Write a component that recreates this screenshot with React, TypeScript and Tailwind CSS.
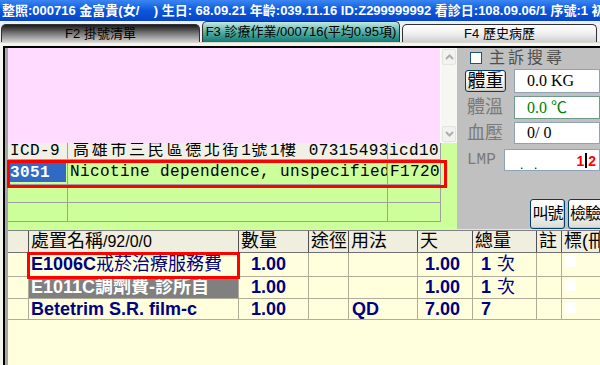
const SANS = "font-['Liberation_Sans','Noto_Sans_CJK_TC',sans-serif]";
const MONO = "font-['Liberation_Mono','Noto_Sans_CJK_TC',monospace]";
const SERIF = "font-['Liberation_Serif','Noto_Sans_CJK_TC',serif]";

function Chevron({ up }: { up?: boolean }) {
  return (
    <svg width="9" height="6" viewBox="0 0 9 6">
      <path
        d={up ? "M1 5 L4.5 1.5 L8 5" : "M1 1 L4.5 4.5 L8 1"}
        fill="none"
        stroke="#a8aeb8"
        strokeWidth="2"
      />
    </svg>
  );
}

function XpButton({ children, className }: { children: React.ReactNode; className?: string }) {
  return (
    <div
      className={
        "rounded-[3px] border border-[#003c74] bg-gradient-to-b from-white via-[#f4f4f0] to-[#dcdcd4] shadow-[inset_-1px_-1px_0_#c8c8c0] flex items-center justify-center text-black leading-none whitespace-nowrap overflow-hidden " +
        (className ?? "")
      }
    >
      {children}
    </div>
  );
}

function Check() {
  return <div className="w-[11px] h-[11px] bg-white mt-[3px] ml-[3px]" />;
}

export default function App() {
  const cols = [21, 210, 70, 40, 69, 55, 64, 25, 38];
  return (
    <div className={"w-[600px] h-[365px] overflow-hidden bg-[#f4f4ee] flex flex-col " + SANS}>
      {/* Title bar */}
      <div className="h-[21px] shrink-0 bg-gradient-to-b from-[#3a86f2] via-[#0b56dc] to-[#0846c6] text-white font-bold text-[13px] leading-[21px] pl-[2px] whitespace-pre overflow-hidden">
        整照:000716 金富貴(女/    ) 生日: 68.09.21 年齡:039.11.16 ID:Z299999992 看診日:108.09.06/1 序號:1 初診
      </div>

      {/* Tabs */}
      <div className="h-[22px] shrink-0 flex items-end gap-[2px] pl-[1px] bg-[#eef0f6] border-b border-[#d8d8cc]">
        <div className="w-[199px] h-[18px] rounded-t-[5px] border border-b-0 border-[#303030] bg-gradient-to-b from-[#1c1c1c] via-[#7a7a7a] to-[#d2d2d2] text-[13px] text-black flex items-center justify-center">
          F2 掛號清單
        </div>
        <div className="w-[198px] h-[21px] rounded-t-[5px] border border-b-0 border-[#303030] bg-gradient-to-b from-[#c4ebe5] via-[#52aea6] to-[#0c7a70] text-[13px] text-black flex items-center justify-center">
          F3 診療作業/000716(平均0.95項)
        </div>
        <div className="w-[195px] h-[18px] rounded-t-[5px] border border-b-0 border-[#303030] bg-gradient-to-b from-white via-[#f0f0f0] to-[#d0d0d0] text-[13px] text-black flex items-center justify-center">
          F4 歷史病歷
        </div>
      </div>

      {/* Main */}
      <div className="flex-1 min-h-0 pt-[3px] pl-[3px] flex flex-col">
        <div className="flex-1 min-h-0 border-t-2 border-l-2 border-black flex">
          <div className="w-[3px] shrink-0 bg-[#a8a8a8]" />
          <div className="flex-1 min-w-0 flex flex-col">
            {/* Upper */}
            <div className="h-[181px] shrink-0 flex">
              <div className="w-[449px] shrink-0 flex flex-col relative">
                {/* pink memo */}
                <div className="h-[95px] flex">
                  <div className="flex-1 bg-[#ffdbff]" />
                  <div className="w-[17px] bg-[#f6f6f2] border-l border-white flex flex-col justify-between py-[1px]">
                    <div className="h-[16px] mx-[1px] rounded-[2px] bg-[#f2f2ee] border border-[#e4e4dc] flex items-center justify-center">
                      <Chevron up />
                    </div>
                    <div className="h-[16px] mx-[1px] rounded-[2px] bg-[#f2f2ee] border border-[#e4e4dc] flex items-center justify-center">
                      <Chevron />
                    </div>
                  </div>
                </div>
                {/* ICD grid */}
                <div className={"flex-1 bg-[#ccff99] text-black " + MONO}>
                  <div className="h-[17px] flex bg-[#f0f0e6] border-b border-[#a0a0a0] leading-[16px] text-[16px] tracking-[0.4px] w-[433px]">
                    <div className="w-[60px] border-r border-[#a0a0a0] pl-[2px] overflow-hidden whitespace-nowrap">ICD-9</div>
                    <div className="w-[320px] border-r border-[#a0a0a0] pl-[5px] overflow-hidden whitespace-pre">
                      <span className="tracking-[2.7px]">高雄市三民區德北街</span>1<span className="tracking-[2.7px]">號</span>1<span className="tracking-[2.7px]">樓</span> 07315493
                    </div>
                    <div className="w-[53px] border-r border-[#a0a0a0] pl-[1px] overflow-hidden whitespace-nowrap">icd10</div>
                  </div>
                  <div className="h-[25px] flex border-b border-[#a0a0a0] text-[16px] tracking-[0.4px] w-[433px]">
                    <div className="w-[60px] border-r border-[#a0a0a0] pt-[3px] pb-[2px] pl-[1px]">
                      <div className="h-full w-[57px] bg-[#316ac5] text-white font-bold leading-[20px] pl-[1px]">3051</div>
                    </div>
                    <div className="w-[320px] border-r border-[#a0a0a0] pl-[2px] leading-[25px] overflow-hidden whitespace-nowrap">
                      Nicotine dependence, unspecified
                    </div>
                    <div className="w-[53px] border-r border-[#a0a0a0] pl-[2px] leading-[25px] overflow-hidden whitespace-nowrap">F1720</div>
                  </div>
                  <div className="h-[18px] flex border-b border-[#a0a0a0] w-[433px]">
                    <div className="w-[60px] border-r border-[#a0a0a0]" />
                    <div className="w-[320px] border-r border-[#a0a0a0]" />
                    <div className="w-[53px] border-r border-[#a0a0a0]" />
                  </div>
                  <div className="h-[19px] flex border-b border-[#a0a0a0] w-[433px]">
                    <div className="w-[60px] border-r border-[#a0a0a0]" />
                    <div className="w-[320px] border-r border-[#a0a0a0]" />
                    <div className="w-[53px] border-r border-[#a0a0a0]" />
                  </div>
                </div>
                {/* red highlight */}
                <div className="absolute left-[-1px] top-[112px] w-[440px] h-[28px] border-[3px] border-[#ff0000]" />
              </div>

              {/* Right panel */}
              <div className="flex-1 bg-[#c0c0c0] flex flex-col pl-[8px] relative">
                <div className="h-[14px] mt-[3px] flex items-center">
                  <div className="w-[12px] h-[12px] border border-[#1c5180] bg-white ml-[5px]" />
                  <div className="ml-[7px] text-[16px] tracking-[3px] text-[#505050] leading-none">主訴搜尋</div>
                </div>
                <div className="h-[24px] mt-[4px] flex">
                  <XpButton className="w-[41px] h-[22px] mt-[1px] text-[18px]">體重</XpButton>
                  <div className={"ml-[8px] flex-1 bg-white border border-[#8fa3b8] pl-[12px] text-[16px] leading-[22px] text-black " + SERIF}>0.0 KG</div>
                </div>
                <div className="h-[23px] mt-[3px] flex">
                  <div className="w-[49px] text-[18px] text-[#7a7a7a] leading-[23px] pl-[2px]">體溫</div>
                  <div className={"flex-1 bg-white border border-[#6f9a8a] pl-[12px] text-[16px] leading-[21px] text-[#008000] " + SERIF}>0.0 ℃</div>
                </div>
                <div className="h-[22px] mt-[3px] flex">
                  <div className="w-[49px] text-[18px] text-[#7a7a7a] leading-[22px] pl-[2px]">血壓</div>
                  <div className={"flex-1 bg-white border border-[#8fa3b8] pl-[12px] text-[16px] leading-[20px] text-black " + SERIF}>0/ 0</div>
                </div>
                <div className="h-[22px] mt-[5px] flex">
                  <div className={"w-[39px] text-[16px] text-[#7a7a7a] leading-[22px] pl-[2px] " + MONO}>LMP</div>
                  <div className="flex-1 bg-white border border-[#8fa3b8] flex items-center relative">
                    <span className="absolute left-[15px] top-[9px] text-[12px] text-black leading-none">.</span>
                    <span className="absolute left-[29px] top-[9px] text-[12px] text-black leading-none">.</span>
                    <span className="absolute right-[3px] top-[3px] flex items-center text-[14px] font-bold text-[#ff0000] leading-[14px]">
                      1<span className="w-[2px] h-[15px] bg-black mx-[1px]" />2
                    </span>
                  </div>
                </div>
                <div className="flex-1" />
                <div className="flex justify-end gap-[3px] overflow-hidden">
                  <XpButton className="w-[35px] h-[30px] shrink-0 text-[16px] tracking-[-1px]">叫號</XpButton>
                  <XpButton className="w-[36px] h-[30px] shrink-0 -mr-[4px] justify-start pl-[1px] text-[16px] tracking-[-1px]">檢驗</XpButton>
                </div>
              </div>
            </div>

            {/* separator */}
            <div className="h-[2px] shrink-0 bg-[#e8e8e0] border-b border-[#808080]" />

            {/* Bottom grid */}
            <div className="flex-1 bg-[#ffffdd] relative">
              <div className="h-[22px] flex bg-[#efeedf] border-b border-[#707070] text-black">
                {[
                  "",
                  "處置名稱/92/0/0",
                  "數量",
                  "途徑",
                  "用法",
                  "天",
                  "總量",
                  "註",
                  "標(冊",
                ].map((t, i) => (
                  <div
                    key={i}
                    style={{ width: cols[i] }}
                    className="shrink-0 border-r border-[#505050] pl-[2px] text-[18px] leading-[21px] overflow-hidden whitespace-nowrap"
                  >
                    {i === 1 ? (
                      <>
                        處置名稱<span className="text-[16px]">/92/0/0</span>
                      </>
                    ) : (
                      t
                    )}
                  </div>
                ))}
              </div>
              {[
                { h: 24, code: "E1006C", name: "戒菸治療服務費", q: "1.00", use: "", day: "1.00", tot: "1", unit: "次", sel: false },
                { h: 22, code: "E1011C", name: "調劑費-診所自", q: "1.00", use: "", day: "1.00", tot: "1", unit: "次", sel: true },
                { h: 21, code: "Betetrim S.R. film-c", name: "", q: "1.00", use: "QD", day: "7.00", tot: "7", unit: "", sel: false },
              ].map((r, ri) => (
                <div key={ri} style={{ height: r.h }} className="flex border-b border-[#b0ac98] text-[#000080]">
                  <div style={{ width: cols[0] }} className="shrink-0 border-r border-[#b0ac98]" />
                  <div style={{ width: cols[1] }} className="shrink-0 border-r border-[#b0ac98] flex">
                    <div
                      className={
                        "flex-1 pl-[2px] flex items-center whitespace-nowrap overflow-hidden " +
                        (r.sel ? "bg-[#808080] text-white" : "")
                      }
                    >
                      <span className="font-bold text-[18px]">{r.code}</span>
                      <span className={"text-[18px] " + (r.sel ? "font-bold" : "")}>{r.name}</span>
                    </div>
                  </div>
                  <div style={{ width: cols[2] }} className="shrink-0 border-r border-[#b0ac98] flex items-center justify-end pr-[22px] font-bold text-[18px]">
                    {r.q}
                  </div>
                  <div style={{ width: cols[3] }} className="shrink-0 border-r border-[#b0ac98]" />
                  <div style={{ width: cols[4] }} className="shrink-0 border-r border-[#b0ac98] flex items-center pl-[3px] font-bold text-[18px]">
                    {r.use}
                  </div>
                  <div style={{ width: cols[5] }} className="shrink-0 border-r border-[#b0ac98] flex items-center justify-end pr-[12px] font-bold text-[18px]">
                    {r.day}
                  </div>
                  <div style={{ width: cols[6] }} className="shrink-0 border-r border-[#b0ac98] flex items-center pl-[8px] text-[18px]">
                    <span className="font-bold">{r.tot}</span>
                    {r.unit && <span className="ml-[6px]">{r.unit}</span>}
                  </div>
                  <div style={{ width: cols[7] }} className="shrink-0 border-r border-[#b0ac98]" />
                  <div style={{ width: cols[8] }} className="shrink-0">
                    <Check />
                  </div>
                </div>
              ))}
              {/* red highlight */}
              <div className="absolute left-[19px] top-[21px] w-[213px] h-[27px] border-[3px] border-[#ff0000]" />
            </div>
          </div>
        </div>
      </div>
    </div>
  );
}
